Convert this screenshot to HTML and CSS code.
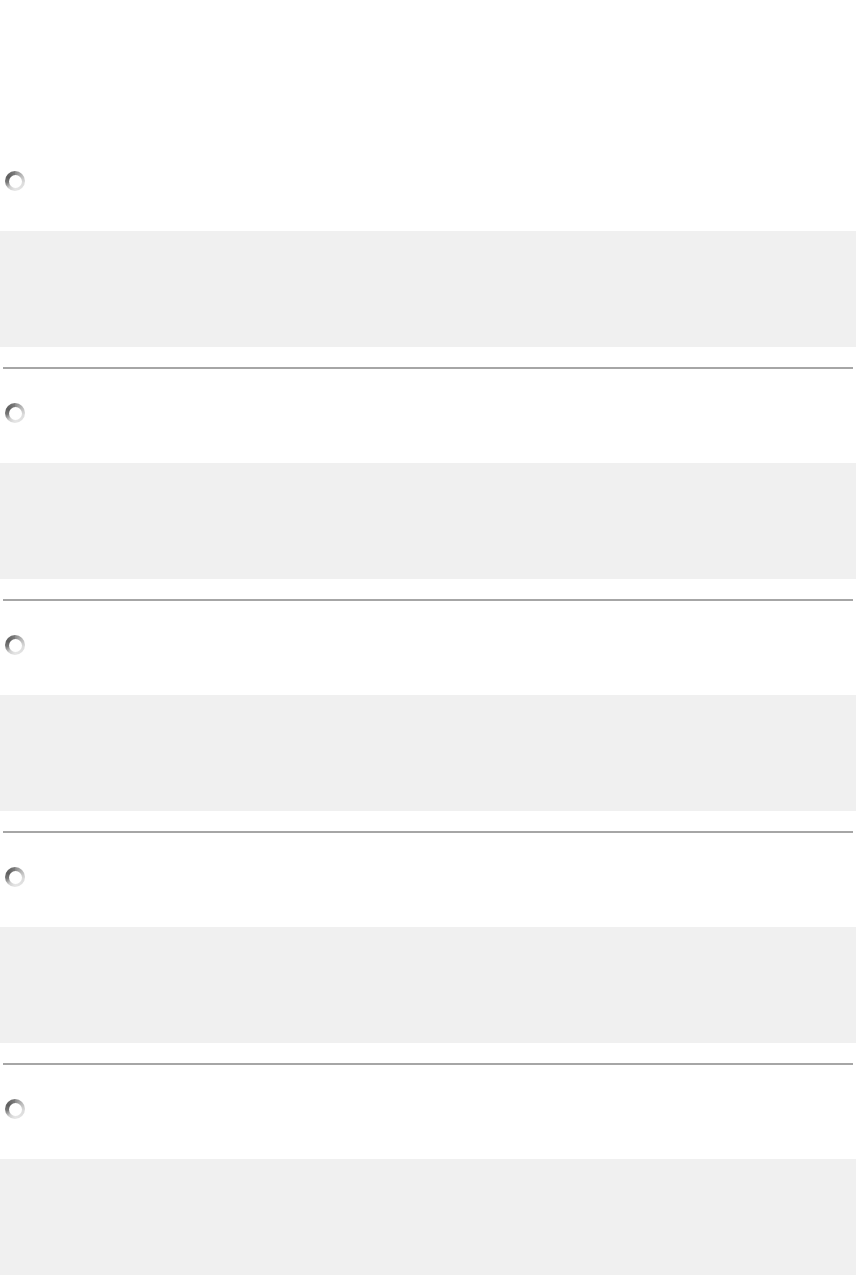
FILE: index.html
```html
<!DOCTYPE html>
<html lang="en">
<head>
<meta charset="utf-8">
<title>Loading</title>
<link rel="stylesheet" href="styles.css">
</head>
<body>
<div class="page">
  <div class="header"></div>
  <div class="item">
    <div class="status"><span class="spinner" aria-label="Loading"></span></div>
    <div class="panel"></div>
  </div>
  <div class="rule"></div>
  <div class="item">
    <div class="status"><span class="spinner" aria-label="Loading"></span></div>
    <div class="panel"></div>
  </div>
  <div class="rule"></div>
  <div class="item">
    <div class="status"><span class="spinner" aria-label="Loading"></span></div>
    <div class="panel"></div>
  </div>
  <div class="rule"></div>
  <div class="item">
    <div class="status"><span class="spinner" aria-label="Loading"></span></div>
    <div class="panel"></div>
  </div>
  <div class="rule"></div>
  <div class="item">
    <div class="status"><span class="spinner" aria-label="Loading"></span></div>
    <div class="panel"></div>
  </div>
</div>
</body>
</html>
```
FILE: styles.css
```css
html, body {
  margin: 0;
  padding: 0;
  background: #ffffff;
  font-family: "Liberation Sans", Arial, sans-serif;
}

.page {
  display: flex;
  flex-direction: column;
  width: 856px;
}

.header {
  height: 137px;
}

.item {
  display: flex;
  flex-direction: column;
}

.status {
  display: flex;
  padding-top: 34px;
  padding-left: 5px;
  height: 20px;
}

.spinner {
  position: relative;
  display: block;
  width: 20px;
  height: 20px;
  border-radius: 50%;
  background: conic-gradient(#8a8a8a 0deg, #b8b8b8 50deg, #dcdcdc 100deg, #e6e6e6 180deg, #cfcfcf 220deg, #7a7a7a 260deg, #5e5e5e 300deg, #7c7c7c 360deg);
}

.spinner::after {
  content: "";
  position: absolute;
  left: 3.5px;
  top: 3.5px;
  width: 13px;
  height: 13px;
  border-radius: 50%;
  background: #ffffff;
}

.panel {
  margin-top: 40px;
  height: 116px;
  background: #f0f0f0;
}

.rule {
  margin: 20px 3px 0;
  height: 2px;
  background: #a6a6a6;
}
```
